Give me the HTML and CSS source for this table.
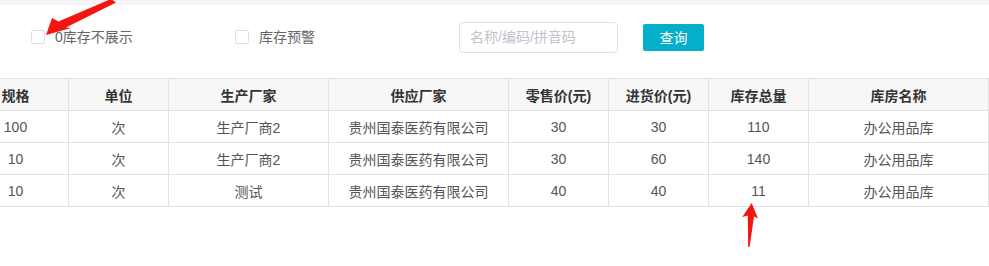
FILE: index.html
```html
<!DOCTYPE html>
<html lang="zh-CN">
<head>
  <meta charset="UTF-8" />
  <title>库存查询</title>
  <link rel="stylesheet" href="styles.css">
</head>
<body>
  <div class="topbar"></div>

  <div class="filters">
    <label class="check check-first"><span class="box"></span>0库存不展示</label>
    <label class="check check-second"><span class="box"></span>库存预警</label>
    <input type="text" class="search" placeholder="名称/编码/拼音码" />
    <button class="btn-query">查询</button>
  </div>

  <div class="table-wrap">
    <table class="stock">
      <thead>
        <tr>
          <th class="c-spec">规格</th>
          <th class="c-unit">单位</th>
          <th class="c-maker">生产厂家</th>
          <th class="c-supplier">供应厂家</th>
          <th class="c-price">零售价(元)</th>
          <th class="c-price">进货价(元)</th>
          <th class="c-price">库存总量</th>
          <th class="c-store">库房名称</th>
        </tr>
      </thead>
      <tbody>
        <tr>
          <td>100</td><td>次</td><td>生产厂商2</td><td>贵州国泰医药有限公司</td>
          <td>30</td><td>30</td><td>110</td><td>办公用品库</td>
        </tr>
        <tr>
          <td>10</td><td>次</td><td>生产厂商2</td><td>贵州国泰医药有限公司</td>
          <td>30</td><td>60</td><td>140</td><td>办公用品库</td>
        </tr>
        <tr>
          <td>10</td><td>次</td><td>测试</td><td>贵州国泰医药有限公司</td>
          <td>40</td><td>40</td><td>11</td><td>办公用品库</td>
        </tr>
      </tbody>
    </table>
  </div>

  <!-- red marker arrows drawn on top -->
  <svg class="arrow arrow-check" width="120" height="40" viewBox="0 0 120 40">
    <polygon points="46,35 52,18 58.5,21.5 111,-1 116,2.5 66,27.5 71,28" fill="#f2160f"/>
  </svg>
  <svg class="arrow arrow-qty" width="40" height="60" viewBox="0 0 40 60">
    <polygon points="21.7,8 28,23.5 24,21.5 19.6,52 18.2,52 17.8,20.5 12.3,22" fill="#f2160f"/>
  </svg>
</body>
</html>
```

FILE: styles.css
```css
body {
  margin: 0;
  font-family: "Liberation Sans", "Noto Sans CJK SC", sans-serif;
  font-size: 14px;
  color: #555;
  background: #fff;
  width: 989px;
  height: 266px;
  overflow: hidden;
  position: relative;
}

.topbar {
  height: 5px;
  background: #f4f3f8;
}

.filters {
  display: flex;
  align-items: center;
  height: 64px;
  padding-left: 31px;
}

.check {
  display: flex;
  align-items: center;
  color: #666;
  font-size: 14px;
  line-height: 16px;
}

.box {
  width: 12px;
  height: 12px;
  border: 1px solid #dcdfe6;
  border-radius: 2px;
  background: #fff;
  margin-right: 10px;
}

.check-first {
  width: 204px;
}

.check-second {
  width: 224px;
}

.search {
  width: 159px;
  height: 31px;
  box-sizing: border-box;
  border: 1px solid #dcdfe6;
  border-radius: 4px;
  padding: 0 10px;
  font-family: inherit;
  font-size: 14px;
  outline: none;
  margin-right: 25px;
}

.search::placeholder {
  color: #c0c4cc;
}

.btn-query {
  width: 61px;
  height: 27px;
  border: none;
  border-radius: 2px;
  background: #04b0c9;
  color: #fff;
  font-family: inherit;
  font-size: 14px;
  padding: 0;
}

.table-wrap {
  margin-top: 9px;
  margin-left: -38px;
}

.stock {
  border-collapse: collapse;
  table-layout: fixed;
  width: 1027px;
}

.stock th,
.stock td {
  border: 1px solid #e2e2e2;
  height: 31px;
  padding: 0;
  text-align: center;
}

.stock th {
  background: #f7f7f7;
  color: #333;
  font-weight: bold;
}

.c-spec { width: 105px; }
.c-unit { width: 99px; }
.c-maker { width: 159px; }
.c-supplier { width: 179px; }
.c-price { width: 99px; }
.c-store { width: 179px; }

.arrow {
  position: absolute;
}

.arrow-check {
  left: 0;
  top: 0;
}

.arrow-qty {
  left: 730px;
  top: 195px;
}
```
